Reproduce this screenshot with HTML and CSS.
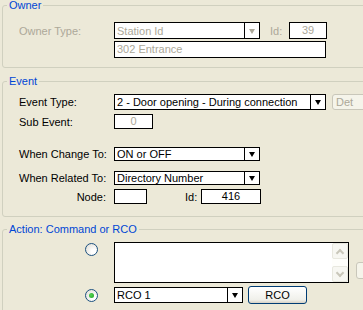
FILE: index.html
```html
<!DOCTYPE html>
<html lang="en">
<head>
    <meta charset="UTF-8">
    <title>Event Action</title>
    <link rel="stylesheet" href="styles.css">
</head>
<body>
    <div class="dialog">

        <!-- Owner -->
        <fieldset class="group group-owner">
            <legend>Owner</legend>
            <div class="row row-owner">
                <span class="label off">Owner Type:</span>
                <div class="combo w146 disabled">
                    <span class="combo-text">Station Id</span>
                    <span class="combo-btn"><i class="arrow"></i></span>
                </div>
                <span class="id-label off">Id:</span>
                <div class="field w38 center off">39</div>
            </div>
            <div class="row row-owner">
                <div class="field w212 indent off">302 Entrance</div>
            </div>
        </fieldset>

        <!-- Event -->
        <fieldset class="group group-event">
            <legend>Event</legend>
            <div class="row row-type">
                <span class="label">Event Type:</span>
                <div class="combo w212">
                    <span class="combo-text">2 - Door opening - During connection</span>
                    <span class="combo-btn"><i class="arrow"></i></span>
                </div>
                <button class="xp-btn btn-det" disabled>Det</button>
            </div>
            <div class="row row-sub">
                <span class="label">Sub Event:</span>
                <div class="field w39 center off">0</div>
            </div>
            <div class="row row-change">
                <span class="label">When Change To:</span>
                <div class="combo w146">
                    <span class="combo-text">ON or OFF</span>
                    <span class="combo-btn"><i class="arrow"></i></span>
                </div>
            </div>
            <div class="row row-related">
                <span class="label">When Related To:</span>
                <div class="combo w146">
                    <span class="combo-text">Directory Number</span>
                    <span class="combo-btn"><i class="arrow"></i></span>
                </div>
            </div>
            <div class="row row-node">
                <span class="label right">Node:</span>
                <div class="field w33"></div>
                <span class="id-label id-node">Id:</span>
                <div class="field w60 center">416</div>
            </div>
        </fieldset>

        <!-- Action -->
        <fieldset class="group group-action">
            <legend>Action: Command or RCO</legend>
            <div class="row row-cmd">
                <span class="radio-cell top"><span class="radio"></span></span>
                <div class="memo">
                    <div class="memo-text"></div>
                    <div class="scroll">
                        <span class="scroll-btn"><i class="chev up"></i></span>
                        <span class="scroll-track"></span>
                        <span class="scroll-btn"><i class="chev down"></i></span>
                    </div>
                </div>
                <button class="xp-btn btn-side" disabled></button>
            </div>
            <div class="row row-rco">
                <span class="radio-cell"><span class="radio checked"></span></span>
                <div class="combo w129">
                    <span class="combo-text">RCO 1</span>
                    <span class="combo-btn"><i class="arrow"></i></span>
                </div>
                <button class="xp-btn btn-rco">RCO</button>
            </div>
        </fieldset>

    </div>
</body>
</html>
```

FILE: styles.css
```css
html, body {
    margin: 0;
    padding: 0;
    overflow: hidden;
}
body {
    background-color: #ECE9D8;
    font-family: "Liberation Sans", Arial, sans-serif;
    font-size: 11px;
    color: #000;
}
.dialog {
    width: 420px;
    padding-left: 2px;
}

/* group boxes */
.group {
    margin: 0;
    padding: 0 0 0 16px;
    border: 1px solid #D0D0BF;
    border-radius: 3px;
    min-width: 0;
}
.group legend {
    margin-left: -12px;
    padding: 0 2px;
    line-height: 10px;
    color: #0046D5;
}
.group-owner {
    padding-top: 12px;
    padding-bottom: 9px;
}
.group-event {
    margin-top: 8px;
    padding-top: 8px;
    padding-bottom: 12px;
}
.group-action {
    margin-top: 7px;
    padding-top: 8px;
    padding-bottom: 10px;
}

/* rows */
.row {
    display: flex;
    align-items: center;
}
.row-owner { height: 17px; }
.row-owner + .row-owner { margin-top: 2px; }
.row-type { height: 16px; }
.row-sub { height: 15px; margin-top: 4px; }
.row-change { height: 14px; margin-top: 18px; }
.row-related { height: 14px; margin-top: 10px; }
.row-node { height: 15px; margin-top: 4px; }
.row-cmd { height: 41px; align-items: stretch; }
.row-rco { height: 18px; margin-top: 3px; }

.label {
    width: 95px;
    flex: none;
    white-space: nowrap;
}
.label.right {
    text-align: right;
    padding-right: 8px;
    width: 87px;
}
.off { color: #ACA899; }

.id-label {
    width: 19px;
    margin-left: 10px;
    flex: none;
}
.id-node {
    margin-left: 38px;
    width: 16px;
}

/* text boxes */
.field {
    box-sizing: border-box;
    height: 100%;
    border: 1px solid #000;
    background: #fff;
    padding-left: 2px;
    line-height: 13px;
    display: flex;
    align-items: center;
    flex: none;
}
.field.center { justify-content: center; padding-left: 0; }
.indent { margin-left: 95px; }

.w33 { width: 33px; }
.w38 { width: 38px; }
.w39 { width: 39px; }
.w60 { width: 60px; }
.w129 { width: 129px; }
.w146 { width: 146px; }
.w212 { width: 212px; }

/* combo boxes */
.combo {
    box-sizing: border-box;
    height: 100%;
    border: 1px solid #000;
    background: #fff;
    display: flex;
    flex: none;
}
.row-rco .combo { height: 16px; }
.combo-text {
    flex: 1;
    padding-left: 2px;
    display: flex;
    align-items: center;
    white-space: nowrap;
    overflow: hidden;
}
.combo.disabled .combo-text { color: #ACA899; }
.combo-btn {
    width: 14px;
    border-left: 1px solid #000;
    display: flex;
    align-items: center;
    justify-content: center;
}
.arrow {
    width: 0;
    height: 0;
    border-left: 3px solid transparent;
    border-right: 3px solid transparent;
    border-top: 5px solid #000;
    margin-top: 1px;
}
.combo.disabled .arrow { border-top-color: #ACA899; }

/* xp buttons */
.xp-btn {
    font-family: inherit;
    font-size: 11px;
    box-sizing: border-box;
    padding: 0;
    border-radius: 3px;
    flex: none;
}
.xp-btn:disabled {
    background: #F5F4EA;
    border: 1px solid #C9C7BA;
    color: #ACA899;
}
.btn-det {
    height: 16px;
    width: 60px;
    margin-left: 6px;
    text-align: left;
    padding-left: 3px;
}
.btn-side {
    align-self: flex-end;
    height: 17px;
    width: 30px;
    margin-left: 7px;
    margin-bottom: 4px;
}
.btn-rco {
    height: 18px;
    width: 59px;
    margin-left: 5px;
    border: 1px solid #003C74;
    background: linear-gradient(#FFFFFF, #F0F0EA 80%, #D6D0C5);
    color: #000;
}

/* radios */
.radio-cell {
    width: 95px;
    flex: none;
    display: flex;
    align-items: center;
}
.radio-cell.top { align-items: flex-start; padding-top: 1px; }
.radio {
    box-sizing: border-box;
    width: 13px;
    height: 13px;
    margin-left: 66px;
    border: 1px solid #1C5180;
    border-radius: 50%;
    background: radial-gradient(circle at 70% 70%, #FFFFFF 20%, #DCD9CF);
    display: flex;
    align-items: center;
    justify-content: center;
}
.radio.checked::after {
    content: "";
    width: 5px;
    height: 5px;
    border-radius: 50%;
    background: radial-gradient(circle at 40% 40%, #55D455, #21A121);
}

/* memo box */
.memo {
    box-sizing: border-box;
    width: 235px;
    border: 1px solid #000;
    background: #fff;
    display: flex;
    flex: none;
}
.memo-text { flex: 1; }
.scroll {
    width: 16px;
    display: flex;
    flex-direction: column;
    background: #FEFEFB;
}
.scroll-btn {
    box-sizing: border-box;
    height: 16px;
    border: 1px solid #E8E8DF;
    border-radius: 2px;
    background: #F7F7F2;
    display: flex;
    align-items: center;
    justify-content: center;
}
.scroll-track { flex: 1; }
.chev {
    width: 4px;
    height: 4px;
    border-left: 2px solid #C9C7BA;
    border-top: 2px solid #C9C7BA;
}
.chev.up { transform: rotate(45deg); margin-top: 3px; }
.chev.down { transform: rotate(225deg); margin-top: -3px; }
```
